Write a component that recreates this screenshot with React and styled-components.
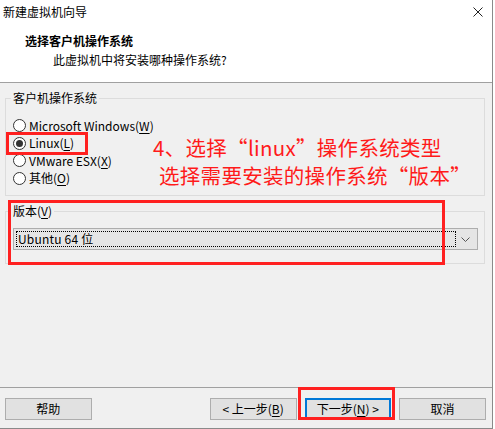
import React from "react";
import styled, { createGlobalStyle } from "styled-components";

const Global = createGlobalStyle`
  html, body { margin: 0; padding: 0; background: #ffffff; }
  body { font-family: "Noto Sans CJK SC", "Noto Sans", sans-serif; font-size: 12px; color: #000; }
`;

const Window = styled.div`
  position: relative;
  box-sizing: border-box;
  width: 493px;
  height: 429px;
  background: #f0f0f0;
  border-right: 1px solid #8a8a8a;
  border-bottom: 1px solid #8a8a8a;
  display: flex;
  flex-direction: column;
  overflow: hidden;
`;

const Header = styled.div`
  background: #ffffff;
  height: 82px;
  border-bottom: 1px solid #a0a0a0;
  flex: none;
  display: flex;
  flex-direction: column;
`;

const TitleRow = styled.div`
  display: flex;
  align-items: center;
  justify-content: space-between;
  height: 24px;
  padding: 0 9px 0 3px;
  line-height: 16px;
`;

const Heading = styled.div`
  font-weight: 700;
  padding-left: 25px;
  margin-top: 8px;
  line-height: 18px;
`;

const SubHeading = styled.div`
  padding-left: 53px;
  line-height: 18px;
  margin-top: 1px;
`;

const Body = styled.div`
  flex: 1;
  padding: 7px 8px 0 5px;
  display: flex;
  flex-direction: column;
  gap: 7px;
`;

const Group = styled.fieldset`
  margin: 0;
  width: 480px;
  box-sizing: border-box;
  border: 1px solid #dcdcdc;
  padding: ${(p) => p.$pad};
  min-width: 0;
`;

const Legend = styled.legend`
  padding: 0 2px;
  margin-left: -2px;
  line-height: 16px;
`;

const RadioRow = styled.label`
  display: flex;
  align-items: center;
  height: 17.5px;
  gap: 3px;
  line-height: 16px;
`;

const RadioDot = styled.span`
  box-sizing: border-box;
  width: 13px;
  height: 13px;
  border-radius: 50%;
  border: 1px solid #333333;
  background: #ffffff;
  display: flex;
  align-items: center;
  justify-content: center;
  flex: none;
  &::after {
    content: "";
    width: 7px;
    height: 7px;
    border-radius: 50%;
    background: ${(p) => (p.$checked ? "#333333" : "transparent")};
  }
`;

const Select = styled.div`
  box-sizing: border-box;
  width: 465px;
  height: 22px;
  background: #e5e5e5;
  border: 1px solid #adadad;
  display: flex;
  align-items: center;
  padding: 2px;
`;

const FocusBox = styled.div`
  box-sizing: border-box;
  flex: 1;
  height: 100%;
  border: 1px dotted #000;
  display: flex;
  align-items: center;
  padding-left: 1px;
  line-height: 16px;
  letter-spacing: 0.2px;
`;

const Chevron = styled.div`
  width: 19px;
  display: flex;
  justify-content: center;
  align-items: center;
`;

const Footer = styled.div`
  flex: none;
  height: 41px;
  border-top: 1px solid #a0a0a0;
  box-sizing: border-box;
  display: flex;
  align-items: flex-start;
  padding: 10px 6px 0 5px;
`;

const Button = styled.div`
  box-sizing: border-box;
  width: 87px;
  height: 22px;
  background: #e1e1e1;
  border: ${(p) => (p.$default ? "2px solid #0078d7" : "1px solid #adadad")};
  display: flex;
  align-items: center;
  justify-content: center;
  line-height: 16px;
  margin-left: ${(p) => p.$ml || 0}px;
`;

const U = styled.span`
  text-decoration: underline;
  text-underline-offset: 2px;
`;

const Mark = styled.div`
  position: absolute;
  box-sizing: border-box;
  border: 3px solid #ff2020;
  pointer-events: none;
`;

const Note = styled.div`
  position: absolute;
  left: 153px;
  top: 133px;
  color: #ff1a1a;
  font-size: 20.5px;
  letter-spacing: 0.3px;
  line-height: 28px;
  white-space: nowrap;
`;

const NoteLine = styled.div`
  padding-left: ${(p) => p.$indent || 0}px;
`;

export default function App() {
  return (
    <>
      <Global />
      <Window>
        <Header>
          <TitleRow>
            <span>新建虚拟机向导</span>
            <svg width="10" height="10" viewBox="0 0 10 10">
              <path d="M0.5 0.5 L9.5 9.5 M9.5 0.5 L0.5 9.5" stroke="#222" strokeWidth="1" />
            </svg>
          </TitleRow>
          <Heading>选择客户机操作系统</Heading>
          <SubHeading>此虚拟机中将安装哪种操作系统?</SubHeading>
        </Header>
        <Body>
          <Group $pad="11px 7px 8px 7px">
            <Legend>客户机操作系统</Legend>
            <RadioRow>
              <RadioDot />
              <span>Microsoft Windows(<U>W</U>)</span>
            </RadioRow>
            <RadioRow>
              <RadioDot $checked />
              <span>Linux(<U>L</U>)</span>
            </RadioRow>
            <RadioRow>
              <RadioDot />
              <span>VMware ESX(<U>X</U>)</span>
            </RadioRow>
            <RadioRow>
              <RadioDot />
              <span>其他(<U>O</U>)</span>
            </RadioRow>
          </Group>
          <Group $pad="9px 6px 13px 7px">
            <Legend>版本(<U>V</U>)</Legend>
            <Select>
              <FocusBox>Ubuntu 64 位</FocusBox>
              <Chevron>
                <svg width="9" height="5" viewBox="0 0 9 5">
                  <path d="M0.5 0.5 L4.5 4.5 L8.5 0.5" stroke="#555" strokeWidth="1" fill="none" />
                </svg>
              </Chevron>
            </Select>
          </Group>
        </Body>
        <Footer>
          <Button>帮助</Button>
          <Button $ml={118}>&lt; 上一步(<U>B</U>)</Button>
          <Button $ml={8} $default>下一步(<U>N</U>) &gt;</Button>
          <Button $ml={8}>取消</Button>
        </Footer>
        <Note>
          <NoteLine>4、选择“linux”操作系统类型</NoteLine>
          <NoteLine $indent={6}>选择需要安装的操作系统“版本”</NoteLine>
        </Note>
        <Mark style={{ left: 6, top: 132, width: 82, height: 23 }} />
        <Mark style={{ left: 8, top: 200, width: 437, height: 65 }} />
        <Mark style={{ left: 298, top: 387, width: 97, height: 33 }} />
      </Window>
    </>
  );
}
